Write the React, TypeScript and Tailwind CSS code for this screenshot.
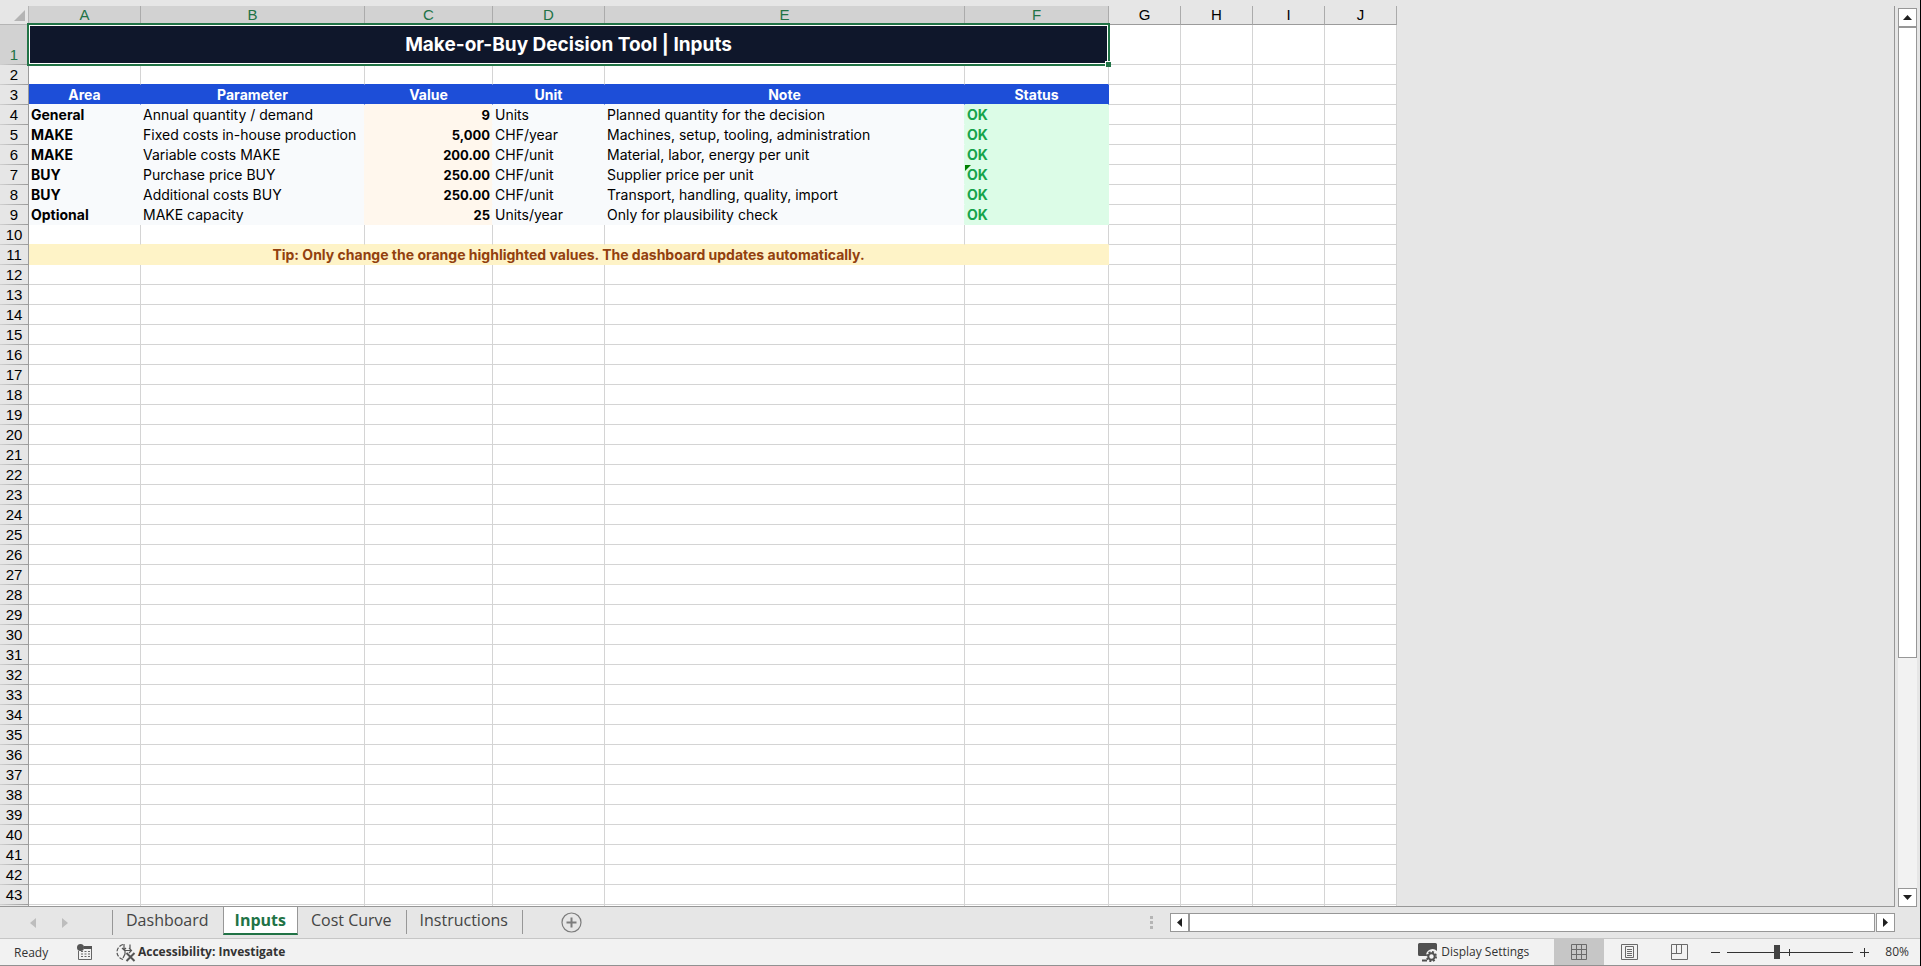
import clsx from 'clsx';
import { FC, ReactNode, useState } from 'react';

const COLUMNS = [
    { name: 'A', width: 'w-[112px]' },
    { name: 'B', width: 'w-[224px]' },
    { name: 'C', width: 'w-[128px]' },
    { name: 'D', width: 'w-[112px]' },
    { name: 'E', width: 'w-[360px]' },
    { name: 'F', width: 'w-[144px]' },
    { name: 'G', width: 'w-[72px]' },
    { name: 'H', width: 'w-[72px]' },
    { name: 'I', width: 'w-[72px]' },
    { name: 'J', width: 'w-[72px]' },
];

const HEADINGS = ['Area', 'Parameter', 'Value', 'Unit', 'Note', 'Status'];

type InputRow = {
    area: string;
    parameter: string;
    value: string;
    unit: string;
    note: string;
    warning?: boolean;
};

const INPUTS: InputRow[] = [
    {
        area: 'General',
        parameter: 'Annual quantity / demand',
        value: '9',
        unit: 'Units',
        note: 'Planned quantity for the decision',
    },
    {
        area: 'MAKE',
        parameter: 'Fixed costs in-house production',
        value: '5,000',
        unit: 'CHF/year',
        note: 'Machines, setup, tooling, administration',
    },
    {
        area: 'MAKE',
        parameter: 'Variable costs MAKE',
        value: '200.00',
        unit: 'CHF/unit',
        note: 'Material, labor, energy per unit',
    },
    {
        area: 'BUY',
        parameter: 'Purchase price BUY',
        value: '250.00',
        unit: 'CHF/unit',
        note: 'Supplier price per unit',
        warning: true,
    },
    {
        area: 'BUY',
        parameter: 'Additional costs BUY',
        value: '250.00',
        unit: 'CHF/unit',
        note: 'Transport, handling, quality, import',
    },
    {
        area: 'Optional',
        parameter: 'MAKE capacity',
        value: '25',
        unit: 'Units/year',
        note: 'Only for plausibility check',
    },
];

const SHEETS = ['Dashboard', 'Inputs', 'Cost Curve', 'Instructions'];

const Row: FC<{ index?: number; children?: ReactNode }> = ({
    index,
    children,
}) => (
    <tr className={index === 1 ? 'h-10' : 'h-5'}>
        <th
            scope="row"
            className={clsx(
                'border-r border-r-[#9b9b9b] bg-[linear-gradient(to_right,#d0d0d0,#9b9b9b)] bg-[length:100%_1px] bg-bottom bg-no-repeat p-0 pb-px align-bottom font-["Liberation_Sans",sans-serif] text-[15px] leading-[18px] font-normal',
                index === 1 ? 'bg-[#d2d2d2] text-[#217346]' : 'text-black'
            )}
        >
            {index}
        </th>
        {children}
    </tr>
);

const Empty: FC<{ count: number; className?: string }> = ({
    count,
    className = 'border-b-[#d4d4d4] border-r-[#d4d4d4]',
}) => (
    <>
        {Array.from({ length: count }).map((_, index) => (
            <td
                key={index}
                className={clsx('border-r border-b bg-white p-0', className)}
            />
        ))}
    </>
);

const InputCells: FC<{ row: InputRow }> = ({ row }) => (
    <>
        <td className="border-r border-b border-slate-50 bg-slate-50 p-0 pl-0.5 font-bold">
            {row.area}
        </td>
        <td className="border-r border-b border-r-orange-50 border-b-slate-50 bg-slate-50 p-0 pl-0.5">
            {row.parameter}
        </td>
        <td className="border-r border-b border-r-slate-50 border-b-orange-50 bg-orange-50 p-0 pr-0.5 text-right text-[13px] font-bold">
            {row.value}
        </td>
        <td className="border-r border-b border-slate-50 bg-slate-50 p-0 pl-0.5">
            {row.unit}
        </td>
        <td className="border-r border-b border-r-[#dcfce7] border-b-slate-50 bg-slate-50 p-0 pl-0.5">
            {row.note}
        </td>
        <td className="relative border-r border-b border-[#dcfce7] bg-[#dcfce7] p-0 pl-0.5 font-bold text-[#16a34a]">
            {row.warning && (
                <span className="absolute top-0 left-0 border-t-[6px] border-r-[6px] border-t-[#008000] border-r-transparent" />
            )}
            OK
        </td>
    </>
);

const Sheet: FC = () => (
    <table className="w-[1397px] table-fixed border-separate border-spacing-0 font-[Inter,sans-serif] text-sm leading-[18px] whitespace-nowrap text-black">
        <colgroup>
            <col className="w-[29px]" />
            {COLUMNS.map(({ name, width }) => (
                <col key={name} className={width} />
            ))}
        </colgroup>
        <thead>
            <tr className="h-[19px] font-['Liberation_Sans',sans-serif] text-[15px] leading-[18px]">
                <td className="border-r border-b border-r-[#b5b5b5] border-b-[#b5b5b5] p-0">
                    <svg className="ml-[14px] size-[11px] fill-[#b4b4b4]">
                        <path d="M11 0v11H0z" />
                    </svg>
                </td>
                {COLUMNS.map(({ name }, index) => (
                    <th
                        key={name}
                        scope="col"
                        className={clsx(
                            'border-r border-b border-r-[#ababab] border-b-[#9b9b9b] p-0 font-normal',
                            index < 6 && 'bg-[#d2d2d2] text-[#217346]'
                        )}
                    >
                        {name}
                    </th>
                ))}
            </tr>
        </thead>
        <tbody>
            <Row index={1}>
                <td
                    colSpan={6}
                    className="relative border-r border-b border-white bg-slate-900 p-0 text-center text-[19px] leading-6 font-bold text-white"
                >
                    Make-or-Buy Decision Tool | Inputs
                    <span className="absolute -inset-0.5 border-2 border-[#217346] shadow-[inset_0_0_0_1px_white]" />
                    <span className="absolute -right-[3px] -bottom-[3px] size-1.5 border-t border-l border-white bg-[#217346]" />
                </td>
                <Empty count={4} />
            </Row>
            <Row index={2}>
                <Empty
                    count={6}
                    className="border-r-[#d4d4d4] border-b-[#1d4ed8]"
                />
                <Empty count={4} />
            </Row>
            <Row index={3}>
                {HEADINGS.map((heading) => (
                    <th
                        key={heading}
                        scope="col"
                        className={clsx(
                            'border-r border-b border-r-[#1d4ed8] bg-[#1d4ed8] p-0 font-bold text-white',
                            heading === 'Value'
                                ? 'border-b-orange-50'
                                : heading === 'Status'
                                  ? 'border-b-[#dcfce7]'
                                  : 'border-b-slate-50'
                        )}
                    >
                        {heading}
                    </th>
                ))}
                <Empty count={4} />
            </Row>
            {INPUTS.map((row, index) => (
                <Row key={row.parameter} index={index + 4}>
                    <InputCells row={row} />
                    <Empty count={4} />
                </Row>
            ))}
            <Row index={10}>
                <Empty
                    count={6}
                    className="border-r-[#d4d4d4] border-b-amber-100"
                />
                <Empty count={4} />
            </Row>
            <Row index={11}>
                <td
                    colSpan={6}
                    className="border-r border-b border-[#fef3c7] bg-[#fef3c7] p-0 text-center font-bold text-[#92400e]"
                >
                    Tip: Only change the orange highlighted values. The
                    dashboard updates automatically.
                </td>
                <Empty count={4} />
            </Row>
            {Array.from({ length: 32 }).map((_, index) => (
                <Row key={index} index={index + 12}>
                    <Empty count={10} />
                </Row>
            ))}
            <Row>
                <Empty count={10} />
            </Row>
        </tbody>
    </table>
);

const VerticalScroll: FC = () => (
    <div className="mt-0.5 mr-[3px] ml-[3px] flex w-[19px] flex-col bg-[#f2f2f2]">
        <button
            aria-label="Scroll up"
            className="grid h-[19px] place-items-center border border-[#979797] bg-white"
        >
            <svg width="9" height="5" className="fill-[#1f1f1f]">
                <path d="M4.500 0L9 5H0z" />
            </svg>
        </button>
        <div className="h-[631px] border border-[#979797] bg-white" />
        <button
            aria-label="Scroll down"
            className="mt-auto grid h-[19px] place-items-center border border-[#979797] bg-white"
        >
            <svg width="9" height="5" className="fill-[#1f1f1f]">
                <path d="M0 0h9L4.500 5z" />
            </svg>
        </button>
    </div>
);

const SheetTabs: FC = () => {
    const [active, setActive] = useState('Inputs');

    return (
        <div className="flex h-8 shrink-0 border-b border-[#c6c6c6] bg-[#e6e6e6] pr-[25px]">
            <div className="flex w-28 items-center gap-[26px] pl-[30px]">
                <button aria-label="Previous sheet">
                    <svg width="6" height="10" className="fill-[#bdbdbd]">
                        <path d="M6 0v10L0 5z" />
                    </svg>
                </button>
                <button aria-label="Next sheet">
                    <svg width="6" height="10" className="fill-[#bdbdbd]">
                        <path d="M0 0v10l6-5z" />
                    </svg>
                </button>
            </div>
            <div className="my-[3px] w-px bg-[#979797]" />
            <div role="tablist" className="flex text-base">
                {SHEETS.map((name) => (
                    <button
                        key={name}
                        role="tab"
                        aria-selected={name === active}
                        onClick={() => setActive(name)}
                        className="flex items-start"
                    >
                        <span
                            className={clsx(
                                'block leading-[26px]',
                                name === active
                                    ? 'h-7 border-x border-b-2 border-x-[#979797] border-b-[#217346] bg-white px-[11px] font-bold text-[#217346]'
                                    : 'pr-3.5 pl-[13px] text-[#444]'
                            )}
                        >
                            {name}
                        </span>
                        {(name === 'Cost Curve' || name === 'Instructions') && (
                            <span className="mt-[3px] h-6 w-px bg-[#979797]" />
                        )}
                    </button>
                ))}
            </div>
            <button aria-label="New sheet" className="ml-[38px]">
                <svg
                    width="21"
                    height="21"
                    fill="none"
                    className="stroke-[#7c7c7c]"
                >
                    <circle cx="10.5" cy="10.5" r="9.500" strokeWidth="1.200" />
                    <path d="M5.500 10.500h10M10.500 5.500v10" strokeWidth="2" />
                </svg>
            </button>
            <div className="ml-auto flex w-[20px] flex-col gap-0.5 pt-[9px]">
                <span className="size-[3px] bg-[#b5b5b5]" />
                <span className="size-[3px] bg-[#b5b5b5]" />
                <span className="size-[3px] bg-[#b5b5b5]" />
            </div>
            <div className="mt-1.5 flex h-[19px] w-[39%] max-w-[725px] gap-px">
                <div className="flex grow">
                    <button
                        aria-label="Scroll left"
                        className="grid w-[19px] place-items-center border border-[#979797] bg-white"
                    >
                        <svg width="5" height="9" className="fill-[#1f1f1f]">
                            <path d="M5 0v9L0 4.500z" />
                        </svg>
                    </button>
                    <div className="grow border border-[#979797] bg-white" />
                </div>
                <button
                    aria-label="Scroll right"
                    className="grid w-[19px] place-items-center border border-[#979797] bg-white"
                >
                    <svg width="5" height="9" className="fill-[#1f1f1f]">
                        <path d="M0 0v9l5-4.500z" />
                    </svg>
                </button>
            </div>
        </div>
    );
};

const MacroIcon: FC = () => (
    <svg width="16" height="16" fill="none">
        <path d="M1.500 7v8.500h13v-13" stroke="#666" />
        <path d="M7 2h8v3H7z" fill="#555" />
        <path
            d="M4 7.500h2m1.500 0h2m1.500 0h2M4 10h2m1.500 0h2m1.500 0h2M4 12.500h2m1.500 0h2m1.500 0h2"
            stroke="#666"
        />
        <circle cx="3.500" cy="3.500" r="3.500" fill="#555" />
    </svg>
);

const AccessibilityIcon: FC = () => (
    <svg width="20" height="19" fill="none" stroke="#555">
        <path
            d="M7 1.500C3.500 2.500 1 5.500 1 9c0 3.500 2.500 6.500 6 7.500"
            strokeDasharray="4 1.500"
            strokeWidth="1.200"
        />
        <path
            d="M8 1v5.500M6 5l2 2 2-2M8 7.500h8M14 1.500v4M13 5l2.500 2.500L13 10M9 8v3l-2 4"
            strokeWidth="1.200"
        />
        <path d="M10.500 10l8 8M18.500 10l-8 8" strokeWidth="2" />
    </svg>
);

const DisplayIcon: FC = () => (
    <svg width="20" height="19" fill="none">
        <path
            d="M1.500 0h16A1.500 1.500 0 0119 1.500V8a6.500 6.500 0 00-11 5H1.500A1.500 1.500 0 010 11.500v-10A1.500 1.500 0 011.500 0z"
            fill="#505050"
        />
        <path d="M4 17.500h5" stroke="#505050" strokeWidth="2" />
        <circle
            cx="13.500"
            cy="13.500"
            r="4.600"
            stroke="#505050"
            strokeWidth="1.800"
            strokeDasharray="2 1.610"
        />
        <circle
            cx="13.500"
            cy="13.500"
            r="3.200"
            stroke="#505050"
            strokeWidth="2"
        />
    </svg>
);

const StatusBar: FC = () => {
    const [zoom, setZoom] = useState(80);

    return (
        <div className="flex h-[27px] shrink-0 items-center border-b border-[#919191] bg-[#f2f2f2] text-xs text-[#333]">
            <span className="w-[77px] pt-px pl-3.5">Ready</span>
            <button aria-label="Record macro">
                <MacroIcon />
            </button>
            <button className="ml-[23px] flex items-center gap-0.5 font-bold">
                <AccessibilityIcon />
                Accessibility: Investigate
            </button>
            <button className="mr-[25px] ml-auto flex items-center gap-[3px]">
                <DisplayIcon />
                Display Settings
            </button>
            <button
                aria-label="Normal view"
                className="grid h-full w-[50px] place-items-center bg-[#c6c6c6]"
            >
                <svg width="16" height="16" fill="none" stroke="#6a6a6a">
                    <path d="M.5.5h15v15H.5zM5.500.5v15M10.500.5v15M.5 5.500h15M.5 10.500h15" />
                </svg>
            </button>
            <button
                aria-label="Page layout"
                className="grid h-full w-[50px] place-items-center"
            >
                <svg width="17" height="16" fill="none" stroke="#6a6a6a">
                    <path d="M.5.5h16v15H.5zM4.500 2.500h8v11h-8zM6 5.500h5M6 7.500h5M6 9.500h5M6 11.500h5" />
                </svg>
            </button>
            <button
                aria-label="Page break preview"
                className="grid h-full w-[50px] place-items-center"
            >
                <svg width="17" height="16" fill="none" stroke="#6a6a6a">
                    <path d="M.5.5h16v15H.5zM.5 9.500h10v-9M5.500.5v9" />
                </svg>
            </button>
            <button
                aria-label="Zoom out"
                className="ml-[7px]"
                onClick={() => setZoom(Math.max(10, zoom - 10))}
            >
                <svg width="9" height="9" stroke="#333">
                    <path d="M0 4.500h9" />
                </svg>
            </button>
            <div className="relative mx-[7px] flex h-full w-[126px] items-center">
                <span className="absolute top-[13px] h-px w-full bg-[#333]" />
                <span className="absolute top-2.5 left-[62px] h-[7px] w-px bg-[#333]" />
                <input
                    type="range"
                    aria-label="Zoom"
                    min={10}
                    max={190}
                    value={zoom}
                    onChange={(event) => setZoom(Number(event.target.value))}
                    className="relative h-3.5 w-full appearance-none bg-transparent [&::-webkit-slider-thumb]:h-3.5 [&::-webkit-slider-thumb]:w-1.5 [&::-webkit-slider-thumb]:appearance-none [&::-webkit-slider-thumb]:bg-[#444]"
                />
            </div>
            <button
                aria-label="Zoom in"
                onClick={() => setZoom(Math.min(190, zoom + 10))}
            >
                <svg width="9" height="9" stroke="#333">
                    <path d="M0 4.500h9M4.500 0v9" />
                </svg>
            </button>
            <button className="mr-[11px] ml-4">{zoom}%</button>
        </div>
    );
};

export default function App() {
    return (
        <div className="flex h-screen flex-col overflow-hidden border-r border-black bg-[#e6e6e6] font-['Open_Sans',sans-serif]">
            <div className="flex min-h-0 flex-1 pt-1.5">
                <main className="min-w-0 flex-1 overflow-hidden border-r border-b border-[#979797]">
                    <Sheet />
                </main>
                <VerticalScroll />
            </div>
            <SheetTabs />
            <StatusBar />
        </div>
    );
}
